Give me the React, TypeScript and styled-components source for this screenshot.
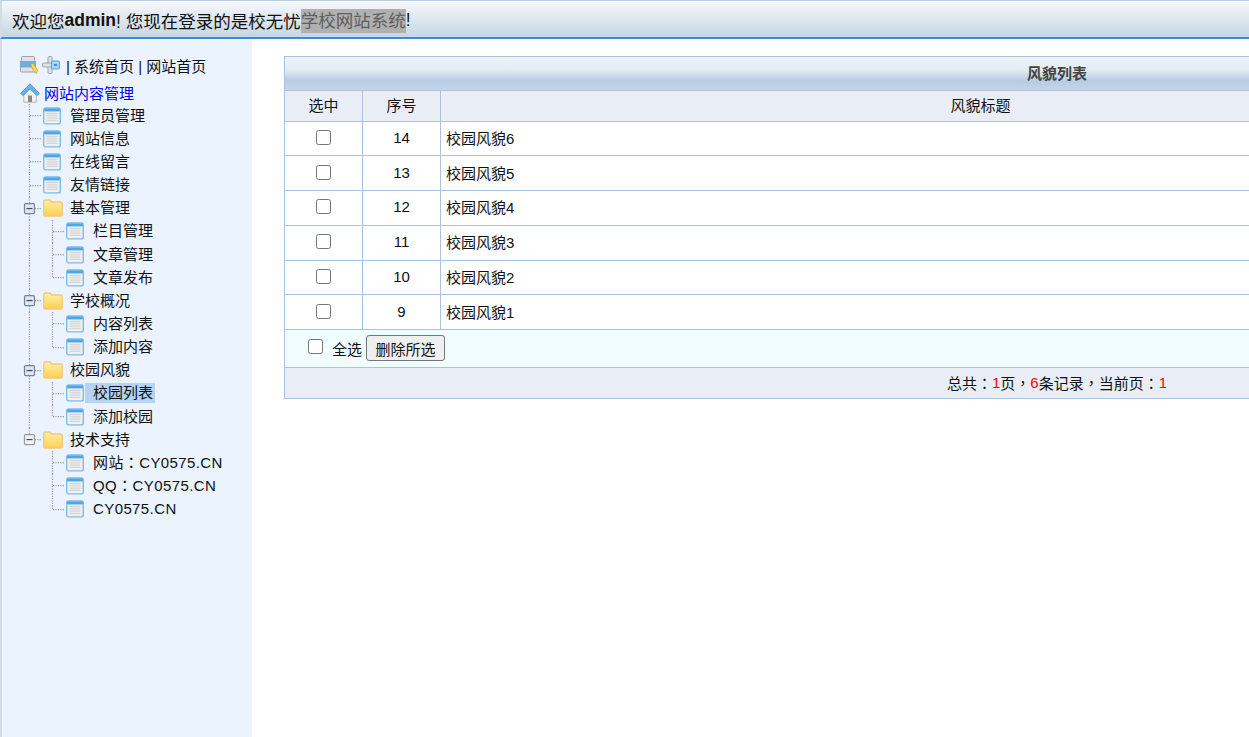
import styled, { createGlobalStyle } from 'styled-components'

type TreeNode = {
  label: string
  children?: string[]
  selected?: string
  wide?: boolean
}

type GuideKind = 'line' | 'join' | 'end' | 'blank' | 'minus' | 'minusEnd'

const TREE: TreeNode[] = [
  { label: '管理员管理' },
  { label: '网站信息' },
  { label: '在线留言' },
  { label: '友情链接' },
  { label: '基本管理', children: ['栏目管理', '文章管理', '文章发布'] },
  { label: '学校概况', children: ['内容列表', '添加内容'] },
  { label: '校园风貌', children: ['校园列表', '添加校园'], selected: '校园列表' },
  { label: '技术支持', children: ['网站：CY0575.CN', 'QQ：CY0575.CN', 'CY0575.CN'], wide: true }
]

const RECORDS = [
  { id: 14, title: '校园风貌6' },
  { id: 13, title: '校园风貌5' },
  { id: 12, title: '校园风貌4' },
  { id: 11, title: '校园风貌3' },
  { id: 10, title: '校园风貌2' },
  { id: 9, title: '校园风貌1' }
]

const GlobalStyle = createGlobalStyle`
  *, *::before, *::after {
    box-sizing: border-box;
  }

  html, body {
    height: 100%;
  }

  body {
    margin: 0;
    overflow: hidden;
    background: #ffffff;
    color: #000000;
    font-family: 'Liberation Sans', 'Noto Sans CJK SC', sans-serif;
    font-size: 15px;
  }
`

function Guide({ kind }: { kind: GuideKind }) {
  const down = kind === 'line' || kind === 'join' || kind === 'minus'
  const up = kind !== 'blank'
  const across = kind === 'join' || kind === 'end' || kind === 'minus' || kind === 'minusEnd'
  const box = kind === 'minus' || kind === 'minusEnd'
  return (
    <GuideSvg viewBox="0 0 23 23" preserveAspectRatio="none">
      {up && <path d={`M11.5 0V${down ? 23 : 12}`} stroke="#9c9c9c" strokeWidth="1.2" strokeDasharray="1.2 1.2" fill="none" />}
      {across && <path d="M12 11.5H25" stroke="#9c9c9c" strokeWidth="1.2" strokeDasharray="1.2 1.2" fill="none" />}
      {box && (
        <>
          <rect x="6.5" y="6.5" width="10" height="10" rx="1" fill={kind === 'minus' ? '#dfe5ee' : '#f0f2f4'} stroke={kind === 'minus' ? '#74859f' : '#9a9a9a'} strokeWidth="1.2" />
          <path d="M8.5 11.5H14.5" stroke="#3c4c66" strokeWidth="1.2" fill="none" />
        </>
      )}
    </GuideSvg>
  )
}

function PageIcon() {
  return (
    <IconSvg $size={18} viewBox="0 0 18 18">
      <rect x="0.7" y="0.9" width="16.6" height="16" rx="2" fill="#eef0f2" stroke="#7dbbe8" strokeWidth="1.4" />
      <rect x="1.2" y="1.4" width="15.6" height="3" fill="#4aa6e8" />
      <path d="M3.5 6.5H14.5M3.5 8.8H14.5M3.5 11.1H14.5M3.5 13.4H14.5" stroke="#d4d4d4" strokeWidth="1.3" fill="none" />
    </IconSvg>
  )
}

function FolderIcon() {
  return (
    <IconSvg $size={20} viewBox="0 0 20 18">
      <defs>
        <linearGradient id="folderFill" x1="0" y1="0" x2="0" y2="1">
          <stop offset="0" stopColor="#fff2a6" />
          <stop offset="1" stopColor="#ffcf4f" />
        </linearGradient>
      </defs>
      <path d="M0.8 2.5Q0.8 1 2.3 1H7L8.5 3H18Q19.2 3 19.2 4.5V15.5Q19.2 17 17.7 17H2.3Q0.8 17 0.8 15.5Z" fill="url(#folderFill)" stroke="#f8c67a" strokeWidth="1.4" />
    </IconSvg>
  )
}

function HomeIcon() {
  return (
    <IconSvg $size={20} $height={20} viewBox="0 0 20 20">
      <path d="M3.8 10V19.2H16.2V10L10 5Z" fill="#f4f4f0" stroke="#b4b4ac" />
      <rect x="8" y="12.5" width="4" height="6.5" fill="#8a8a82" />
      <path d="M0.6 10.4L10 0.8L19.4 10.4L16.8 12.6L10 5.8L3.2 12.6Z" fill="#66b4ea" stroke="#3f92cf" strokeWidth="0.9" />
    </IconSvg>
  )
}

function SystemIcon() {
  return (
    <IconSvg $size={18} viewBox="0 0 18 18">
      <rect x="1.5" y="0.5" width="13" height="5" rx="1" fill="#e1e3e6" stroke="#9aa0a6" />
      <rect x="0.5" y="5.5" width="15" height="5.5" fill="#62b3ec" stroke="#86a4bd" />
      <rect x="0.5" y="11" width="15" height="5" rx="1" fill="#dfe2e5" stroke="#9aa0a6" />
      <path d="M10.5 8.5L13 7L17.5 14L16.5 17.5L13.8 15.5Z" fill="#f4d84f" stroke="#b89d2c" strokeWidth="0.7" />
    </IconSvg>
  )
}

function ExtendIcon() {
  return (
    <IconSvg $size={18} viewBox="0 0 18 18">
      <rect x="6" y="0.5" width="4" height="17" rx="1" fill="#dde1e6" stroke="#9fa8b3" />
      <rect x="0.5" y="7" width="9" height="4" rx="1" fill="#dde1e6" stroke="#9fa8b3" />
      <rect x="9.5" y="5" width="8" height="8" rx="1" fill="#a8d6f4" stroke="#5aa2d8" />
      <rect x="12" y="8" width="3" height="2" fill="#3f8fca" />
    </IconSvg>
  )
}

function App() {
  return (
    <>
      <GlobalStyle />
      <Page>
        <TopBar>
          欢迎您<strong>admin</strong>! 您现在登录的是校无忧<Marked>学校网站系统</Marked>!
        </TopBar>
        <Main>
          <Sidebar>
            <QuickLinks>
              <SystemIcon />
              <ExtendIcon />
              <QuickText>| 系统首页 | 网站首页</QuickText>
            </QuickLinks>
            <RootRow>
              <HomeIcon />
              <RootLabel>网站内容管理</RootLabel>
            </RootRow>
            {TREE.map((node, index) => {
              const isLast = index === TREE.length - 1
              if (!node.children) {
                return (
                  <TreeRow key={node.label}>
                    <Guide kind="join" />
                    <IconSlot><PageIcon /></IconSlot>
                    <TreeLabel>{node.label}</TreeLabel>
                  </TreeRow>
                )
              }
              return (
                <div key={node.label}>
                  <TreeRow>
                    <Guide kind={isLast ? 'minusEnd' : 'minus'} />
                    <IconSlot><FolderIcon /></IconSlot>
                    <TreeLabel>{node.label}</TreeLabel>
                  </TreeRow>
                  {node.children.map((child, childIndex) => (
                    <TreeRow key={child}>
                      <Guide kind={isLast ? 'blank' : 'line'} />
                      <Guide kind={childIndex === node.children!.length - 1 ? 'end' : 'join'} />
                      <IconSlot><PageIcon /></IconSlot>
                      <TreeLabel $selected={child === node.selected} $wide={node.wide}>{child}</TreeLabel>
                    </TreeRow>
                  ))}
                </div>
              )
            })}
          </Sidebar>
          <Content>
            <Panel>
              <PanelTitle>风貌列表</PanelTitle>
              <HeadRow>
                <Cell $center>选中</Cell>
                <Cell $center>序号</Cell>
                <Cell $center>风貌标题</Cell>
                <Cell />
              </HeadRow>
              {RECORDS.map((record) => (
                <DataRow key={record.id}>
                  <Cell $center><Check type="checkbox" /></Cell>
                  <Cell $center>{record.id}</Cell>
                  <Cell>{record.title}</Cell>
                  <Cell />
                </DataRow>
              ))}
              <ActionRow>
                <ActionCheck type="checkbox" />
                <SelectAll>全选</SelectAll>
                <DeleteButton type="button">删除所选</DeleteButton>
              </ActionRow>
              <StatusRow>
                总共：<Count>1</Count>页，<Count>6</Count>条记录，当前页：<Count>1</Count>
              </StatusRow>
            </Panel>
          </Content>
        </Main>
      </Page>
    </>
  )
}

const Page = styled.div`
  height: 100vh;
  display: flex;
  flex-direction: column;
  overflow: hidden;
`

const TopBar = styled.header`
  flex: none;
  height: 39px;
  padding: 3px 0 0 10px;
  display: flex;
  align-items: center;
  white-space: pre;
  font-size: 17.5px;
  color: #111111;
  background: linear-gradient(#f6f9fc, #c6d6e2);
  border-top: 1px solid #b9cde0;
  border-left: 2px solid #d3dde8;
  border-bottom: 2px solid #3a8bd6;

  strong {
    font-weight: 700;
  }
`

const Marked = styled.span`
  background: #b0b0b0;
  color: #5f5f5f;
  line-height: 24px;
`

const Main = styled.div`
  flex: 1;
  min-height: 0;
  display: flex;
`

const Sidebar = styled.aside`
  flex: none;
  width: 252px;
  padding: 14px 0 0 16px;
  background: #eaf3ff;
  border-left: 2px solid #d3dde8;
`

const QuickLinks = styled.div`
  height: 24px;
  margin-bottom: 4px;
  padding-left: 2px;
  display: flex;
  align-items: center;
  gap: 4px;
`

const QuickText = styled.span`
  margin-left: 2px;
  color: #111111;
`

const IconSvg = styled.svg<{ $size: number; $height?: number }>`
  flex: none;
  width: ${(p) => p.$size}px;
  height: ${(p) => p.$height ?? 18}px;
`

const GuideSvg = styled.svg`
  flex: none;
  width: 23px;
  height: 23.15px;
  display: block;
`

const RootRow = styled.div`
  height: 23.15px;
  padding-left: 2px;
  display: flex;
  align-items: center;
`

const RootLabel = styled.span`
  margin-left: 4px;
  color: #0000ff;
`

const TreeRow = styled.div`
  height: 23.15px;
  display: flex;
  align-items: center;
`

const IconSlot = styled.span`
  flex: none;
  width: 21px;
  padding-left: 2px;
  display: flex;
`

const TreeLabel = styled.span<{ $selected?: boolean; $wide?: boolean }>`
  height: 20px;
  line-height: 20px;
  padding: 0 2px 0 8px;
  color: #111111;
  white-space: nowrap;
  background: ${(p) => (p.$selected ? '#b4d4f7' : 'transparent')};
  font-family: ${(p) => (p.$wide ? "'Liberation Sans', 'Noto Sans CJK TC', sans-serif" : 'inherit')};
  letter-spacing: ${(p) => (p.$wide ? '0.4px' : '0')};
`

const Content = styled.main`
  flex: 1;
  min-width: 0;
  padding: 17px 0 0 32px;
  overflow: hidden;
`

const Panel = styled.section`
  width: 1546px;
  border: 1px solid #aac3e0;
`

const PanelTitle = styled.h2`
  margin: 0;
  height: 34px;
  padding-bottom: 2px;
  display: flex;
  align-items: center;
  justify-content: center;
  font-size: 15px;
  font-weight: 700;
  color: #444444;
  background: linear-gradient(#eef3f9 0%, #e2eaf3 40%, #b8cbe2 72%, #c6d5e7 100%);
  border-bottom: 1px solid #aac3e0;
`

const HeadRow = styled.div`
  height: 30.75px;
  display: grid;
  grid-template-columns: 78px 78px 1080px 1fr;
  background: #e9eef6;
  border-bottom: 1px solid #aac3e0;
`

const DataRow = styled.div`
  height: 34.7px;
  display: grid;
  grid-template-columns: 78px 78px 1080px 1fr;
  border-bottom: 1px solid #aac3e0;
`

const Cell = styled.div<{ $center?: boolean }>`
  display: flex;
  align-items: center;
  justify-content: ${(p) => (p.$center ? 'center' : 'flex-start')};
  padding: 0 5px 2px;
  color: #111111;
  border-right: 1px solid #aac3e0;

  &:last-child {
    border-right: 0;
  }
`

const Check = styled.input`
  flex: none;
  width: 15px;
  height: 15px;
  margin: 0;
`

const ActionRow = styled.div`
  height: 38px;
  padding-left: 23px;
  display: flex;
  align-items: center;
  background: #f0fdff;
  border-bottom: 1px solid #aac3e0;
`

const ActionCheck = styled(Check)`
  margin-bottom: 4px;
`

const SelectAll = styled.span`
  margin-left: 9px;
  color: #111111;
`

const DeleteButton = styled.button`
  margin-left: 4px;
  width: 79px;
  height: 26px;
  padding: 0;
  font: inherit;
  color: #111111;
  background: #efefef;
  border: 1px solid #767676;
  border-radius: 3px;
`

const StatusRow = styled.div`
  height: 30px;
  padding-bottom: 1px;
  display: flex;
  align-items: center;
  justify-content: center;
  font-family: 'Liberation Sans', 'Noto Sans CJK TC', sans-serif;
  color: #111111;
  background: #e9eef6;
`

const Count = styled.span`
  color: #ff0000;
`

export default App
